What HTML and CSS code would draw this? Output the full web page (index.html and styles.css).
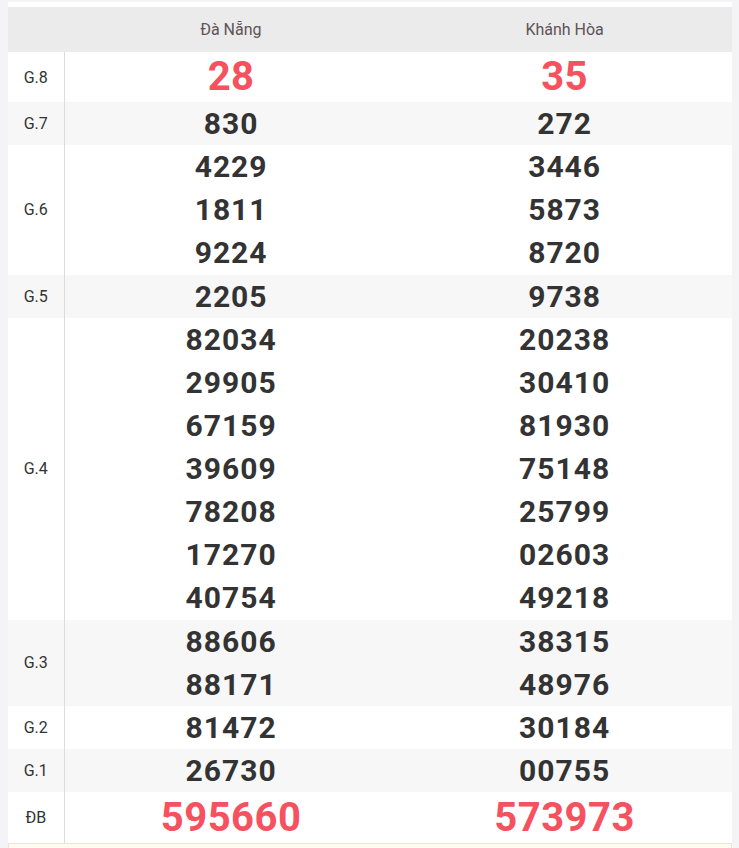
FILE: index.html
```html
<!DOCTYPE html>
<html lang="vi">
<head>
<meta charset="utf-8">
<link rel="stylesheet" href="styles.css">
</head>
<body>
<div class="card">
  <table class="kq">
    <thead>
      <tr><th class="lbl"></th><th>Đà Nẵng</th><th>Khánh Hòa</th></tr>
    </thead>
    <tbody>
      <tr class="g8"><td class="lbl">G.8</td><td><div class="red">28</div></td><td><div class="red">35</div></td></tr>
      <tr class="alt"><td class="lbl">G.7</td><td><div>830</div></td><td><div>272</div></td></tr>
      <tr><td class="lbl">G.6</td><td><div>4229</div><div>1811</div><div>9224</div></td><td><div>3446</div><div>5873</div><div>8720</div></td></tr>
      <tr class="alt"><td class="lbl">G.5</td><td><div>2205</div></td><td><div>9738</div></td></tr>
      <tr><td class="lbl">G.4</td><td><div>82034</div><div>29905</div><div>67159</div><div>39609</div><div>78208</div><div>17270</div><div>40754</div></td><td><div>20238</div><div>30410</div><div>81930</div><div>75148</div><div>25799</div><div>02603</div><div>49218</div></td></tr>
      <tr class="alt"><td class="lbl">G.3</td><td><div>88606</div><div>88171</div></td><td><div>38315</div><div>48976</div></td></tr>
      <tr><td class="lbl">G.2</td><td><div>81472</div></td><td><div>30184</div></td></tr>
      <tr class="alt"><td class="lbl">G.1</td><td><div>26730</div></td><td><div>00755</div></td></tr>
      <tr class="db"><td class="lbl">ĐB</td><td><div class="red">595660</div></td><td><div class="red">573973</div></td></tr>
    </tbody>
  </table>
  <div class="note"></div>
</div>
</body>
</html>
```
FILE: styles.css
```css
html, body {
  margin: 0;
  padding: 0;
  background: #f4f4f7;
  font-family: Roboto, "Liberation Sans", Arial, sans-serif;
}
.card {
  margin: 2px 0 0 8px;
  width: 724px;
  background: #fff;
  padding-top: 5px;
}
.kq {
  width: 100%;
  border-collapse: collapse;
  table-layout: fixed;
}
.kq th {
  height: 45px;
  padding: 0;
  background: #ebebeb;
  font-weight: 400;
  font-size: 16px;
  color: #5e5356;
  text-align: center;
}
.kq th.lbl, .kq td.lbl {
  width: 56px;
}
.kq td {
  padding: 0;
  text-align: center;
  vertical-align: middle;
}
.kq td.lbl {
  font-size: 16px;
  color: #333;
  border-right: 1px solid #dcdcdc;
}
.kq td div {
  height: 43.125px;
  line-height: 43.125px;
  font-size: 30px;
  font-weight: 700;
  color: #333;
  letter-spacing: 1px;
}
.kq tr.alt td {
  background: #f7f7f7;
}
.kq tr.g8 td div {
  height: 50px;
  line-height: 50px;
}
.kq tr.db td div {
  height: 51px;
  line-height: 51px;
}
.kq td div.red {
  color: #f5515f;
  font-size: 40px;
  letter-spacing: 0.5px;
}
.note {
  height: 10px;
  background: #fffbf2;
  border: 1px solid #f3e3cc;
}
```
